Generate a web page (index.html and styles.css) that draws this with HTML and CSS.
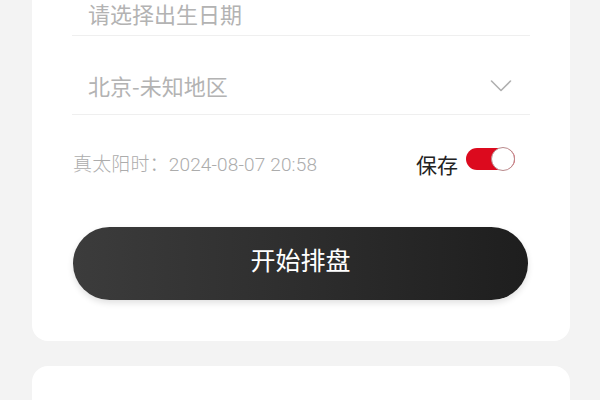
FILE: index.html
```html
<!DOCTYPE html>
<html lang="zh-CN">
<head>
<meta charset="utf-8">
<title>排盘</title>
<link rel="stylesheet" href="styles.css">
</head>
<body>
<div class="page">
  <section class="card form-card">
    <div class="field field-first">
      <span class="placeholder">请选择出生日期</span>
    </div>
    <div class="field field-second">
      <span class="placeholder">北京-未知地区</span>
      <svg class="chevron" width="22" height="14" viewBox="0 0 22 14"><path d="M1.5 2 L11 11.5 L20.5 2" fill="none" stroke="#b0b0b0" stroke-width="1.6" stroke-linecap="round" stroke-linejoin="round"/></svg>
    </div>
    <div class="info-row">
      <span class="solar">真太阳时：2024-08-07 20:58</span>
      <div class="save">
        <span class="save-label">保存</span>
        <span class="toggle"><span class="knob"></span></span>
      </div>
    </div>
    <button class="start-btn">开始排盘</button>
  </section>
  <section class="card next-card"></section>
</div>
</body>
</html>
```
FILE: styles.css
```css
html, body {
  margin: 0;
  padding: 0;
  background: #f3f3f3;
  width: 600px;
  height: 400px;
  overflow: hidden;
  font-family: "Roboto", "Noto Sans CJK SC", sans-serif;
}
.page {
  display: flex;
  flex-direction: column;
  gap: 25px;
  margin-top: -40px;
  padding: 0 30px 0 32px;
}
.card {
  background: #ffffff;
  border-radius: 16px;
}
.form-card {
  padding: 0 40px 41px 40px;
  display: flex;
  flex-direction: column;
}
.field {
  display: flex;
  justify-content: space-between;
  padding: 0 18px 0 16px;
  border-bottom: 1px solid #efefef;
  box-sizing: border-box;
}
.field-first {
  height: 76px;
  align-items: flex-end;
  padding-bottom: 10px;
}
.field-second {
  height: 54px;
  margin-top: 25px;
  align-items: center;
  padding-bottom: 6px;
}
.placeholder {
  font-family: "Noto Sans CJK SC", sans-serif;
  font-size: 22px;
  line-height: 24px;
  color: #b3b3b3;
}
.chevron {
  display: block;
  margin-top: 2px;
}
.info-row {
  display: flex;
  align-items: center;
  justify-content: space-between;
  height: 30px;
  margin-top: 34px;
  padding-right: 15px;
}
.solar {
  font-size: 19px;
  font-weight: 300;
  color: #acacac;
  line-height: 24px;
  margin-left: 1px;
  padding-top: 2px;
  letter-spacing: 0.15px;
}
.save {
  display: flex;
  align-items: center;
  gap: 8px;
}
.save-label {
  font-family: "Noto Sans CJK SC", sans-serif;
  font-size: 21px;
  color: #222222;
  line-height: 24px;
}
.toggle {
  position: relative;
  display: block;
  width: 49px;
  height: 22px;
  border-radius: 11px;
  background: #dc0a1e;
  transform: translateY(-5px);
}
.knob {
  position: absolute;
  right: 0;
  top: -1px;
  width: 24px;
  height: 24px;
  box-sizing: border-box;
  border-radius: 50%;
  background: #ffffff;
  border: 1.5px solid #b98a8c;
}
.start-btn {
  margin-top: 48px;
  width: 455px;
  height: 73px;
  border: none;
  border-radius: 37px;
  background: linear-gradient(90deg, #3c3c3c 0%, #2c2c2c 55%, #1e1e1e 100%);
  box-shadow: 0 3px 6px rgba(0, 0, 0, 0.12);
  color: #ffffff;
  font-family: "Noto Sans CJK SC", sans-serif;
  font-size: 25px;
  line-height: 30px;
  padding: 0 0 10px 0;
  margin-left: 1px;
}
.next-card {
  height: 120px;
}
```
